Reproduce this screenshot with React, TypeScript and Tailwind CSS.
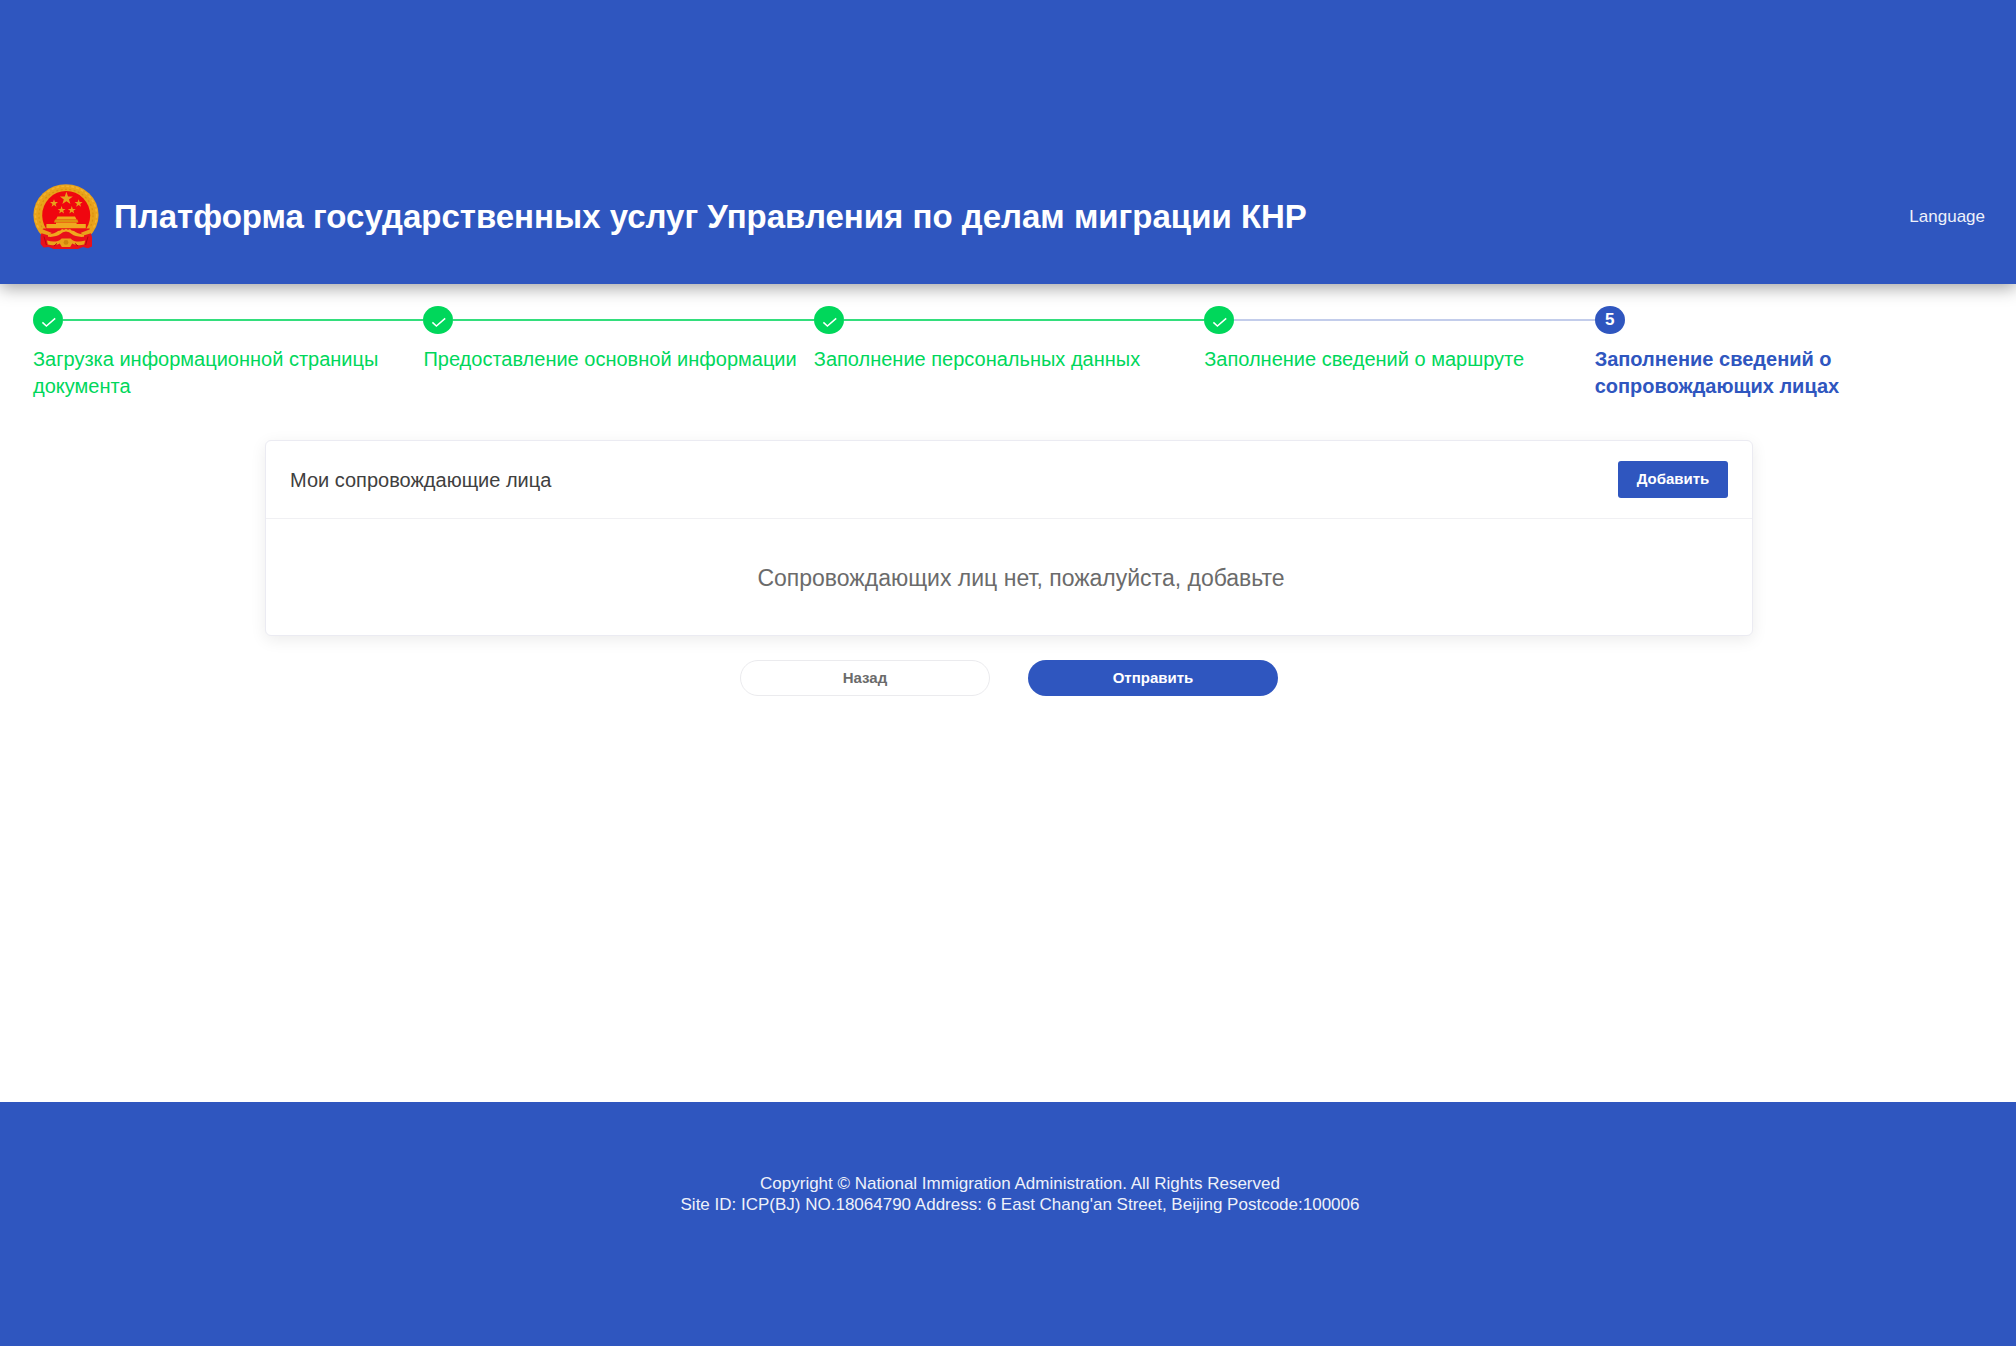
import { clsx } from 'clsx';

type StepState = 'done' | 'current';

interface Step {
  label: string;
  state: StepState;
}

const STEPS: Step[] = [
  { label: 'Загрузка информационной страницы документа', state: 'done' },
  { label: 'Предоставление основной информации', state: 'done' },
  { label: 'Заполнение персональных данных', state: 'done' },
  { label: 'Заполнение сведений о маршруте', state: 'done' },
  { label: 'Заполнение сведений о сопровождающих лицах', state: 'current' },
];

const STAR = 'M0-10 2.4-3.1 9.5-3.1 3.8 1.2 5.9 8.1 0 3.9-5.9 8.1-3.8 1.2-9.5-3.1-2.4-3.1Z';

const STARS = [
  { x: 33.4, y: 14.6, s: 0.68 },
  { x: 21, y: 19.4, s: 0.42 },
  { x: 45.6, y: 19.4, s: 0.42 },
  { x: 28.6, y: 26.2, s: 0.42 },
  { x: 38.8, y: 26.2, s: 0.42 },
];

function Emblem() {
  return (
    <svg viewBox="0 0 66 66" className="size-[66px] shrink-0" role="img" aria-label="National emblem">
      <ellipse cx="33" cy="31" rx="32.6" ry="30.8" fill="#e9a21a" />
      {/* wheat ears */}
      <ellipse cx="33" cy="31" rx="30.6" ry="28.8" fill="none" stroke="#f2b32f" strokeWidth="1.6" strokeDasharray="3 2" />
      <ellipse cx="33" cy="31.3" rx="27" ry="26" fill="none" stroke="#d8920f" strokeWidth="1.2" strokeDasharray="2 2.4" />
      <ellipse cx="33.2" cy="31.4" rx="24" ry="24.4" fill="#f0060f" />
      {STARS.map(star => (
        <path key={`${star.x}-${star.y}`} d={STAR} fill="#e8a01c" transform={`translate(${star.x} ${star.y}) scale(${star.s})`} />
      ))}
      {/* gate */}
      <path d="M24.5 32.6H42l1.6 3H23Z" fill="#f0a81e" />
      <path d="M22 35.6h22.4l1 3H21Z" fill="#df930f" />
      <path d="M23 38.6h20.6v2H23Z" fill="#f0a81e" />
      <path d="M13.4 40h39.4v4.4H13.4Z" fill="#f0a81e" />
      {/* ribbons and cog */}
      <path d="M10 44.4h46.4L59 53v9.6l-4 1.6-5-1.2-5 2H20.6l-5-2-5 .6L7.6 60V52Z" fill="#e8101a" />
      <path d="M4.5 44.5 10 45.6l9 3.4-4 2.2L7.6 49ZM61.5 44.5 56.4 45.6l-9 3.4 4 2.2 7.4-2.2Z" fill="#e9a21a" />
      <path d="M15 50.5c5-.3 7.6-1.4 10-3.4l2.4-.6 1.6-1.4 2 .6 2-1 2 1 2-.6 1.6 1.4 2.4.6c2.4 2 5 3.1 10 3.4v2.3c-5.6.4-9.6-.6-12.4-2.7a7.4 7.4 0 0 0-11.2 0c-2.8 2.1-6.8 3.1-12.4 2.7Z" fill="#f0a81e" />
      <path d="M14 56.4c5 1.6 9.4 1.6 13-.4l1.6-1.4h9l1.6 1.4c3.6 2 8 2 13 .4l-1 4.2c-4.6 1.2-8.6.8-12-1l-2 3.4h-8.4l-2-3.4c-3.4 1.8-7.4 2.2-12 1Z" fill="#e9a21a" />
      <circle cx="33" cy="58.4" r="2.4" fill="#cf850c" />
      <path d="M11 52.5 13.4 61M55 52.5 52.6 61M21 62l3-2.6M45 62l-3-2.6" fill="none" stroke="#b3080f" strokeWidth="1" />
    </svg>
  );
}

function StepItem({ step, index }: { step: Step; index: number }) {
  const done = step.state === 'done';
  const beforeCurrent = STEPS[index + 1]?.state === 'current';
  const last = index === STEPS.length - 1;

  return (
    <li className="min-w-0 flex-1" aria-current={done ? undefined : 'step'}>
      <div className="flex items-center">
        <span
          className={clsx(
            'flex h-7 w-[30px] shrink-0 items-center justify-center rounded-[50%] text-[17px] font-bold text-white',
            done ? 'bg-[#00d75b]' : 'bg-[#2f56bf]',
          )}
        >
          {done ? (
            <svg viewBox="0 0 30 28" className="h-7 w-[30px]" aria-hidden="true">
              <path d="M9.4 16.4 13.4 20 22.2 12.4" fill="none" stroke="#fff" strokeWidth="1.5" />
            </svg>
          ) : (
            index + 1
          )}
        </span>
        {!last && <span className={clsx('h-0.5 flex-1', beforeCurrent ? 'bg-[#c3cdeb]' : 'bg-[#33de7c]')} />}
      </div>
      <p className={clsx('mt-3 text-xl leading-[27px]', done ? 'text-[#00d75b]' : 'max-w-[260px] font-bold text-[#2f56bf]')}>
        {step.label}
      </p>
    </li>
  );
}

export default function App() {
  return (
    <div className="flex min-h-screen flex-col bg-white font-['Liberation_Sans',Arial,sans-serif]">
      <header className="flex items-center bg-[#2f56bf] pt-[184px] pr-[31px] pb-[34px] pl-[33px] text-white shadow-[0_4px_16px_rgba(0,0,0,0.36)]">
        <Emblem />
        <h1 className="ml-[15px] text-[33px] font-bold">Платформа государственных услуг Управления по делам миграции КНР</h1>
        <button type="button" className="ml-auto text-[17px] text-[#eef1fa]">Language</button>
      </header>

      <main className="flex-1 pt-[22px] pr-[31px] pl-[33px]">
        <ol className="flex">
          {STEPS.map((step, i) => (
            <StepItem key={step.label} step={step} index={i} />
          ))}
        </ol>

        <section className="mx-[232px] mt-10 rounded-md border border-[#ebebf2] bg-white shadow-[0_4px_16px_rgba(0,0,0,0.08)]">
          <div className="flex items-center justify-between border-b border-[#f0f0f3] px-6 py-5">
            <h2 className="text-xl text-[#404040]">Мои сопровождающие лица</h2>
            <button type="button" className="h-[37px] w-[110px] rounded-[3px] bg-[#2f56bf] text-[15px] font-bold text-white">Добавить</button>
          </div>
          <p className="pt-[46px] pb-[43px] pl-6 text-center text-[23px] leading-[27px] text-[#6b6b6b]">Сопровождающих лиц нет, пожалуйста, добавьте</p>
        </section>

        <div className="mt-6 flex justify-center gap-[38px]">
          <button type="button" className="h-9 w-[250px] rounded-full border border-[#ebebee] bg-white text-[15px] font-bold text-[#6b6b6b]">Назад</button>
          <button type="button" className="h-9 w-[250px] rounded-full bg-[#2f56bf] text-[15px] font-bold text-white">Отправить</button>
        </div>
      </main>

      <footer className="bg-[#2f56bf] pt-[71px] pb-[131px] pl-6 text-center text-[17px] leading-[21px] text-[#eef1fa]">
        <p>Copyright © National Immigration Administration. All Rights Reserved</p>
        <p>Site ID: ICP(BJ) NO.18064790 Address: 6 East Chang'an Street, Beijing Postcode:100006</p>
      </footer>
    </div>
  );
}
